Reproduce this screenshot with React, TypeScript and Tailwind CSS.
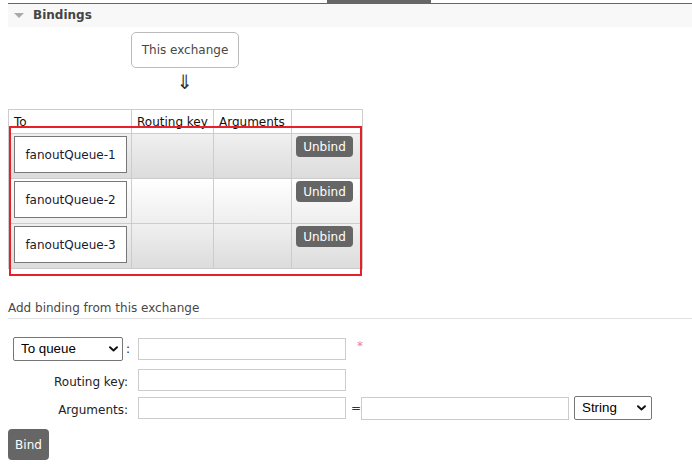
import React from "react";

function Chevron({ className }: { className: string }) {
  return (
    <svg
      width="9"
      height="6"
      viewBox="0 0 9 6"
      className={className}
    >
      <path d="M1 1.2l3.5 3.3L8 1.2" fill="none" stroke="#111" strokeWidth="1.9" strokeLinecap="round" strokeLinejoin="round" />
    </svg>
  );
}

const rows = [
  { name: "fanoutQueue-1", bg: "bg-gradient-to-b from-[#f0f0f0] to-[#dcdcdc]" },
  { name: "fanoutQueue-2", bg: "bg-gradient-to-b from-[#ffffff] to-[#eeeeee]" },
  { name: "fanoutQueue-3", bg: "bg-gradient-to-b from-[#f0f0f0] to-[#dcdcdc]" },
];

export default function App() {
  return (
    <div className="relative w-[692px] h-[471px] overflow-hidden bg-white font-['DejaVu_Sans',Verdana,sans-serif] text-[12px] leading-[14px] text-[#484848]">
      <div className="ml-[8px]">
        {/* top strip */}
        <div className="h-[3px]">
          <div className="ml-[319px] w-[104px] h-[3px] bg-[#666]" />
        </div>
        <div className="h-px bg-[#666]" />
        {/* section header */}
        <div className="h-[23px] bg-[#f8f8f8] flex items-start pt-[4px]">
          <svg width="10" height="5" viewBox="0 0 10 5" className="ml-[6px] mt-[5px]">
            <polygon points="0,0 10,0 5,5" fill="#aaaaaa" />
          </svg>
          <span className="ml-[9px] font-bold text-[#444]">Bindings</span>
        </div>

        {/* This exchange */}
        <div className="ml-[123px] mt-[5px] w-[108px] h-[36px] border border-[#bbb] rounded-[5px] flex items-center justify-center text-[#484848]">
          This exchange
        </div>
        <div className="ml-[123px] w-[108px] h-[41px] flex justify-center pt-[3px] text-[20px] leading-[22px] text-[#333]">
          ⇓
        </div>

        {/* bindings table */}
        <div className="relative w-[355px]">
          <div className="grid grid-cols-[123px_82px_78px_71px] border-l border-t border-[#ccc] text-[#111]">
            <div className="h-[24px] border-r border-b border-[#ccc] bg-white pl-[5px] pb-[4px] flex items-end">To</div>
            <div className="h-[24px] border-r border-b border-[#ccc] bg-white pl-[5px] pb-[4px] flex items-end">Routing key</div>
            <div className="h-[24px] border-r border-b border-[#ccc] bg-white pl-[5px] pb-[4px] flex items-end">Arguments</div>
            <div className="h-[24px] border-r border-b border-[#ccc] bg-white" />
            {rows.map((r) => (
              <React.Fragment key={r.name}>
                <div className={`h-[45px] border-r border-b border-[#ccc] pl-[5px] pt-[2px] ${r.bg}`}>
                  <div className="w-[113px] h-[37px] border border-[#777] bg-white flex items-center justify-center text-[#1a1a2e]">
                    {r.name}
                  </div>
                </div>
                <div className={`h-[45px] border-r border-b border-[#ccc] ${r.bg}`} />
                <div className={`h-[45px] border-r border-b border-[#ccc] ${r.bg}`} />
                <div className={`h-[45px] border-r border-b border-[#ccc] pl-[4px] pt-[2px] ${r.bg}`}>
                  <button className="w-[57px] h-[21px] rounded-[4px] bg-[#666] text-white flex items-center justify-center">
                    Unbind
                  </button>
                </div>
              </React.Fragment>
            ))}
          </div>
          <div className="pointer-events-none absolute left-[1px] top-[17px] w-[353px] h-[150px] border-2 border-[#e8202a]" />
        </div>

        {/* add binding */}
        <div className="mt-[32px] pb-[3px] border-b border-[#e2e2e2] text-[#484848]">
          Add binding from this exchange
        </div>

        <div className="mt-[18px] text-[#222]">
          <div className="flex items-center h-[24px]">
            <div className="pl-[5px] flex items-center">
              <div className="relative w-[110px] h-[24px]">
                <select className="appearance-none w-[110px] h-[24px] border border-[#767676] rounded-[2px] bg-white pl-[7px] font-['Liberation_Sans',Arial,sans-serif] text-[13.33px] text-black">
                  <option>To queue</option>
                  <option>To exchange</option>
                </select>
                <Chevron className="pointer-events-none absolute right-[5px] top-[9px]" />
              </div>
              <span className="ml-[3px] w-[4px]">:</span>
            </div>
            <input className="ml-[8px] w-[208px] h-[22px] border border-[#ccc] bg-white" />
            <span className="ml-[11px] -mt-[6px] text-[#f08080] text-[12px]">*</span>
          </div>

          <div className="flex items-center h-[22px] mt-[8px]">
            <div className="w-[120px] text-right pt-[3px]">Routing key:</div>
            <input className="ml-[10px] w-[208px] h-[22px] border border-[#ccc] bg-white" />
          </div>

          <div className="flex items-center h-[24px] mt-[5px]">
            <div className="w-[120px] text-right pt-[3px]">Arguments:</div>
            <input className="ml-[10px] w-[208px] h-[22px] border border-[#ccc] bg-white" />
            <span className="ml-[5px] w-[10px] text-[#333]">=</span>
            <input className="w-[208px] h-[23px] border border-[#ccc] bg-white" />
            <div className="relative ml-[5px] w-[78px] h-[24px]">
              <select className="appearance-none w-[78px] h-[24px] border border-[#767676] rounded-[2px] bg-white pl-[7px] font-['Liberation_Sans',Arial,sans-serif] text-[13.33px] text-black">
                <option>String</option>
                <option>Number</option>
                <option>Boolean</option>
                <option>List</option>
              </select>
              <Chevron className="pointer-events-none absolute right-[6px] top-[9px]" />
            </div>
          </div>

          <button className="mt-[9px] w-[41px] h-[31px] rounded-[4px] bg-[#666] text-white flex items-center justify-center">
            Bind
          </button>
        </div>
      </div>
    </div>
  );
}
